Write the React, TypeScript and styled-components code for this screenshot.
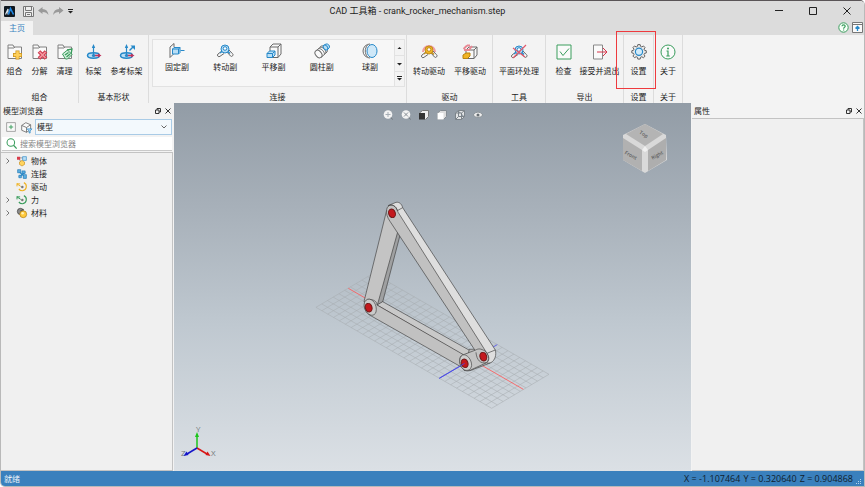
import React from "react";
import styled, { createGlobalStyle } from "styled-components";

const GlobalStyle = createGlobalStyle`
  * { box-sizing: border-box; }
  html, body { margin: 0; height: 100%; }
  body, button, input, select {
    font-family: "Open Sans", "Noto Sans CJK SC", sans-serif;
    font-size: 8px;
    line-height: 12px;
    color: #1c1c1c;
  }
  button { border: 0; padding: 0; background: none; cursor: pointer; }
  svg { display: block; flex: none; overflow: visible; }
`;

const Window = styled.div`
  display: flex;
  flex-direction: column;
  height: 100vh;
  background: #f3f3f3;
  border: 1px solid #b9b9b9;
  border-top-color: #5a5557;
  border-radius: 0 5px 0 5px;
  overflow: hidden;
`;

const TitleBar = styled.header`
  display: flex;
  align-items: center;
  height: 20px;
  background: #dcdcdc;
`;

const QuickAccess = styled.div`
  display: flex;
  align-items: center;
  gap: 4px;
  width: 72px;
  padding-left: 3px;
`;

const Title = styled.h1`
  flex: 1;
  margin: 0;
  text-align: center;
  font-family: Roboto, "Noto Sans CJK SC", sans-serif;
  font-size: 9px;
  font-weight: 400;
  line-height: 18px;
`;

const CaptionButton = styled.button`
  display: grid;
  place-items: center;
  width: 34px;
  height: 18px;
`;

const TabRow = styled.nav`
  display: flex;
  justify-content: space-between;
  align-items: flex-end;
  height: 14px;
  background: #dcdcdc;
`;

const Tab = styled.button`
  width: 32px;
  height: 14px;
  background: #f3f3f3;
  color: #3a83c0;
`;

const TabActions = styled.div`
  display: flex;
  gap: 3px;
  padding: 0 1px 2px;
`;

const Ribbon = styled.div`
  display: flex;
  height: 68px;
  background: #f3f3f3;
`;

const Group = styled.section<{ $width: number }>`
  position: relative;
  display: flex;
  flex-direction: column;
  justify-content: space-between;
  width: ${(p) => p.$width}px;
  height: 68px;
  padding-top: 4px;
  border-right: 1px solid #dcdcdc;
  flex: none;
`;

const GroupItems = styled.div`
  display: flex;
  justify-content: center;
`;

const GroupLabel = styled.h2`
  margin: 0;
  text-align: center;
  font-size: 8px;
  font-weight: 400;
  line-height: 12px;
`;

const RibbonButton = styled.button<{ $width: number }>`
  display: flex;
  flex-direction: column;
  align-items: center;
  gap: 5px;
  width: ${(p) => p.$width}px;
  padding-top: 5px;
  white-space: nowrap;
`;

const Gallery = styled.div`
  display: flex;
  height: 48px;
  margin: 0 1px 0 3px;
  border: 1px solid #e2e2e2;
  background: #f7f7f7;
`;

const GalleryItem = styled.button`
  display: flex;
  flex: 1;
  flex-direction: column;
  align-items: center;
  gap: 2px;
  padding-top: 3px;
`;

const GalleryScroll = styled.div`
  display: grid;
  grid-template-rows: repeat(3, 1fr);
  width: 10px;
  border-left: 1px solid #e2e2e2;
`;

const ScrollButton = styled.button`
  display: grid;
  place-items: center;
  background: #f3f3f3;
  & + & { border-top: 1px solid #e2e2e2; }
`;

const Highlight = styled.div`
  position: absolute;
  inset: -4px -3px auto -8px;
  height: 58px;
  border: 1px solid #ee3a3e;
  pointer-events: none;
`;

const Workspace = styled.main`
  display: flex;
  flex: 1;
  min-height: 0;
`;

const Dock = styled.aside`
  display: flex;
  flex-direction: column;
  width: 172px;
  flex: none;
  background: #f3f3f3;
`;

const DockHeader = styled.div`
  display: flex;
  align-items: center;
  height: 15px;
  padding: 0 2px;
  gap: 4px;
`;

const DockTitle = styled.h2`
  flex: 1;
  margin: 0;
  font-size: 8px;
  font-weight: 400;
  line-height: 12px;
`;

const DockBody = styled.div`
  flex: 1;
  border: 1px solid #c3c3c3;
  border-left: 0;
  background: #f0f0f0;
`;

const BrowserBar = styled.div`
  display: flex;
  align-items: center;
  gap: 5px;
  height: 18px;
  padding: 0 1px 0 5px;
`;

const SelectBox = styled.div`
  display: grid;
  grid-template-columns: 1fr 10px;
  align-items: center;
  flex: 1;
  margin-left: -2px;
  height: 16px;
  border: 1px solid #a9cbe6;
  background: #f3f9fd;
`;

const ModelSelect = styled.select`
  grid-column: 1 / 3;
  grid-row: 1;
  appearance: none;
  height: 14px;
  border: 0;
  padding: 0 1px;
  background: transparent;
`;

const SelectArrow = styled.span`
  grid-column: 2;
  grid-row: 1;
  pointer-events: none;
`;

const SearchBar = styled.label`
  display: flex;
  align-items: center;
  gap: 3px;
  height: 14px;
  margin: 1px 1px;
  padding-left: 4px;
  background: #fff;
  border-bottom: 1px solid #c9c9c9;
`;

const SearchInput = styled.input`
  flex: 1;
  min-width: 0;
  padding: 0;
  border: 0;
  outline: 0;
  background: transparent;
  &::placeholder { color: #858585; opacity: 1; }
`;

const Tree = styled.ul`
  margin: 0;
  padding: 1px 0;
  list-style: none;
`;

const TreeRow = styled.li`
  display: grid;
  grid-template-columns: 6px 10px auto;
  column-gap: 3px;
  align-items: center;
  height: 13px;
  padding-left: 4px;
  & > :nth-child(2) { margin-left: 3px; }
  & > :nth-child(3) { padding-left: 4px; }
`;

const Viewport = styled.section`
  position: relative;
  flex: 1;
  min-width: 0;
  margin: 0 1px;
  overflow: hidden;
  background: linear-gradient(#929ca6, #a7b0b9 28%, #bfc8d0 60%, #dbe0e5);
`;

const Scene = styled.svg`
  width: 100%;
  height: 100%;
`;

const ViewTools = styled.div`
  position: absolute;
  top: 7px;
  left: 0;
  right: 0;
  display: flex;
  justify-content: center;
  gap: 8px;
`;

const CubeOverlay = styled.div`
  position: absolute;
  top: 20px;
  right: 23px;
`;

const TriadOverlay = styled.div`
  position: absolute;
  left: 6px;
  bottom: 10px;
`;

const StatusBar = styled.footer`
  display: flex;
  align-items: center;
  height: 15px;
  padding: 0 2px 0 3px;
  background: #3a80bd;
`;

const StatusText = styled.span`
  flex: 1;
  color: #e6f0f8;
`;

const Coordinates = styled.output`
  display: flex;
  gap: 3px;
  margin-right: 3px;
  font-size: 9px;
  color: #10202e;
`;

const SizeGrip = styled.div`
  align-self: flex-end;
`;

const INK = "#6a6a6a";
const BLUE = "#2789c9";
const PALE = "#b9def5";
const GOLD = "#f0b323";
const RED = "#d8344a";
const GREEN = "#3a9d5d";

type IconName =
  | "compose" | "split" | "clean" | "frame" | "refFrame"
  | "fixed" | "revolute" | "slide" | "cylinder" | "ball"
  | "rotDrive" | "slideDrive" | "loop" | "check" | "exit" | "gear" | "info"
  | "bodies" | "links" | "motors" | "force" | "material" | "addBox" | "cube" | "search";

const folder = (
  <path d="M1 14.500V1h5l1 2h7.500v11.500z M1 4h6l1-1" fill="#fafafa" stroke="#808080" />
);

const axisDisc = (
  <>
    <ellipse cx="7.500" cy="11.500" rx="6" ry="2.700" fill={PALE} stroke={BLUE} strokeWidth="1.500" />
    <path d="M7.500 11V2" stroke={BLUE} strokeWidth="1.200" />
    <path d="M5.800 4l1.700-4 1.700 4z" fill={BLUE} />
    <path d="M8 11.500h5" stroke="#c2355d" strokeWidth="1.600" />
    <path d="M12 9.500l3.500 2-3.500 2z" fill="#c2355d" />
    <circle cx="7.500" cy="11.500" r="1.600" fill={BLUE} />
  </>
);

const clevis = (body: string, edge: string) => (
  <>
    <path d="M5 8L1 11a1.500 1.500 0 0 0 2 2.300L7 10.500M10 9l3.500 4a1.500 1.500 0 0 0 2-2.300L12 7" fill="#f7f7f7" stroke={INK} />
    <circle cx="8" cy="6" r="4" fill={body} stroke={edge} />
    <circle cx="8" cy="5.500" r="1.800" fill="#fff" stroke={edge} />
    <path d="M5 8.500l-2 1.500M11 8.500l2 2" stroke={edge} strokeWidth="1.500" />
  </>
);

const drawings: Record<IconName, React.ReactNode> = {
  compose: <>{folder}<path d="M10.500 6.500v9M6 11h9" stroke="#c8921c" strokeWidth="4" /><path d="M10.500 7.200v7.600M6.700 11h7.600" stroke="#ffd05a" strokeWidth="2.600" /></>,
  split: <>{folder}<path d="M7 7.500l7 7M14 7.500l-7 7" stroke="#cf3a4f" strokeWidth="3.800" /><path d="M7.500 8l6 6M13.500 8l-6 6" stroke="#f49aa3" strokeWidth="1.500" /></>,
  clean: <>{folder}<path d="M5.500 10l5-4 4.500 4.500-4.500 4.500h-2z" fill="#d5f0de" stroke={GREEN} /><path d="M8 11l3.500-2.500M9.500 13l3.500-3M10 6l5-1-1 5" stroke={GREEN} strokeWidth="1.300" /></>,
  frame: axisDisc,
  refFrame: <>{axisDisc}<path d="M10.500 6.500L14 3" stroke={BLUE} strokeWidth="1.500" /><path d="M11.500 1.500H16V6z" fill={BLUE} /></>,
  fixed: <><path d="M1 4L5 0.500V4M5 10.500L1 14.500V4" fill="#f7f7f7" stroke={INK} /><path d="M3.500 6l1.500-1.500h6v5L9.500 11h-6zM3.500 6h6v5M9.500 6L11 4.500M11.500 7.500h4" fill={PALE} stroke={BLUE} /></>,
  revolute: clevis(PALE, BLUE),
  slide: <><path d="M4 4l3-3h8v10l-3 3.500H4V4M4 4h8v10.500M12 4l3-3" fill="#f9f9f9" stroke={INK} /><path d="M1 10.500l2.500-2.500H9v4l-2.500 2.500H1zM1 10.500h5.500v4M6.500 10.500L9 8" fill={PALE} stroke={BLUE} /></>,
  cylinder: <><path d="M2 8l5.500-5c3-1 7 3 5.500 6l-6 5.500" fill="#fafafa" stroke={INK} /><ellipse cx="4.500" cy="11" rx="2.900" ry="4.200" transform="rotate(-40 4.500 11)" fill="#fafafa" stroke={INK} /><path d="M4.500 5.500c3 0 6 3 6 6M6 4c3 0 6 3 6 6" fill="none" stroke={INK} /><path d="M9.500 2.500L12 1a3 3 0 0 1 3.500 3.500l-2 2z" fill={PALE} stroke={BLUE} /><ellipse cx="11.500" cy="4.500" rx="1.900" ry="2.800" transform="rotate(-40 11.500 4.500)" fill={PALE} stroke={BLUE} /></>,
  ball: <><path d="M8 1a7 7 0 1 0 0 14" fill="#fafafa" stroke={INK} /><path d="M5.500 2c-3 4-3 8 0 12" fill="none" stroke={INK} /><ellipse cx="10" cy="8" rx="5" ry="6.500" fill="#cfe8f8" stroke={BLUE} /></>,
  rotDrive: <><path d="M2 8a6 6 0 0 1 12 0" fill="none" stroke="#ef9ba4" strokeWidth="2" />{clevis(GOLD, "#c08c1c")}</>,
  slideDrive: <><path d="M4 6l3-3h8v8l-3 3.500H4V6M4 6h8v8.500M12 6l3-3" fill="#f9f9f9" stroke={INK} /><path d="M1.500 5L5 1.500M5 1.500h3M2 6h5l3-4" stroke="#e98793" strokeWidth="1.800" fill="none" /><path d="M1 11l3-2h4v3l-2.500 2.500H1z" fill={GOLD} stroke="#b9820f" /></>,
  loop: <>{clevis(PALE, BLUE)}<path d="M2 14L15 1M2 4l12 9" stroke="#e0596b" strokeWidth="1.200" /></>,
  check: <><path d="M1 1h14v14H1z" fill="#fafafa" stroke={GREEN} /><path d="M4 7.500l3 4 6-7" fill="none" stroke={GREEN} /></>,
  exit: <><path d="M1.500 1h9v14h-9z" fill="#fafafa" stroke="#888" /><path d="M5 8h10M11 4l4 4-4 4" fill="none" stroke={RED} /></>,
  gear: <g transform="translate(.8 -.3) scale(.9)"><path d="M6.700 1h2.600l.5 2 1.300.6 1.900-1.100 1.700 1.800-1.100 1.800.5 1.200 2 .5v2.500l-2 .5-.5 1.200 1.100 1.900-1.800 1.700-1.800-1.100-1.300.6-.5 2H6.700l-.5-2-1.300-.6L3 15.500l-1.700-1.700 1.100-1.900-.5-1.200-1.900-.5V7.800l1.900-.5.500-1.200L1.300 4.300 3 2.500l1.900 1.100L6.200 3z" fill="#e9e9e9" stroke="#555" /><circle cx="8" cy="9" r="4" fill="#d3ebf9" stroke={BLUE} strokeWidth="1.300" /></g>,
  info: <><circle cx="8" cy="8" r="7" fill="#fafafa" stroke={GREEN} /><circle cx="8" cy="4.500" r="1" fill={GREEN} /><path d="M6.500 7H8v5M6.300 12h3.500" fill="none" stroke={GREEN} strokeWidth="1.200" /></>,
  bodies: <><path d="M3 3l4 9M3 3h9" stroke={INK} /><path d="M0 1h5v5H0z" fill="#d93c4b" /><path d="M9 1h6v6H9z" fill={PALE} stroke={BLUE} /><path d="M4 9.500l4-2.500 4 2.500v4L8 16l-4-2.500z" fill="#ffd45f" stroke="#c68a14" /></>,
  links: <><path d="M2 3l12 11M3 13L13 5" stroke={BLUE} strokeWidth="2" /><path d="M1 1h5v5H1zM10 9h5v6h-5zM8 3h5v4H8zM3 10h4v4H3z" fill="#60afe0" stroke="#1673b4" /></>,
  motors: <><path d="M0 3l6 4M0 2v5M0 3h5" stroke={GOLD} strokeWidth="1.600" /><path d="M11 1c6 3 5 12-2 13-3 0-5-1-6-3" fill="none" stroke={GOLD} strokeWidth="1.800" /><circle cx="8.500" cy="8" r="2" fill="#777" /></>,
  force: <><path d="M0 3l6 4M0 2v5M0 3h5" stroke={GREEN} strokeWidth="1.600" /><path d="M11 1c6 3 5 12-2 13-3 0-5-1-6-3" fill="none" stroke={GREEN} strokeWidth="1.800" /><circle cx="8.500" cy="8" r="2" fill="#777" /></>,
  material: <><circle cx="5.500" cy="5.500" r="5" fill="#8a8a8a" stroke="#333" /><path d="M5 5l6-3" stroke="#333" /><circle cx="10" cy="10" r="5.500" fill="#ffc93c" stroke="#a87509" /><circle cx="9" cy="8.500" r="2" fill="#fff0b5" /></>,
  addBox: <><path d="M1 1h14v14H1z" fill="#fafafa" stroke="#777" /><path d="M8 4.500v7M4.500 8h7" stroke={GREEN} strokeWidth="1.500" /></>,
  cube: <><path d="M1 5l6-4 7 3v7l-6 4-7-3zM1 5l7 3v7M8 8l6-4" fill="#fafafa" stroke={INK} strokeWidth="1.200" /><path d="M9 10h7l-2.700 3v3h-1.500v-3z" fill={PALE} stroke={BLUE} /></>,
  search: <><circle cx="7" cy="6.500" r="5.500" fill="none" stroke={GREEN} strokeWidth="1.500" /><path d="M11 10.500l4.500 5" stroke={GREEN} strokeWidth="1.800" /></>,
};

const Icon = ({ name, size = 16 }: { name: IconName; size?: number }) => (
  <svg width={size} height={size} viewBox="0 0 16 16" fill="none" aria-hidden="true">
    {drawings[name]}
  </svg>
);

type Command = { label: string; icon: IconName; width: number };
const composeCommands: Command[] = [
  { label: "组合", icon: "compose", width: 25 },
  { label: "分解", icon: "split", width: 25 },
  { label: "清理", icon: "clean", width: 25 },
];
const shapeCommands: Command[] = [
  { label: "标架", icon: "frame", width: 26 },
  { label: "参考标架", icon: "refFrame", width: 40 },
];
const joints: { label: string; icon: IconName }[] = [
  { label: "固定副", icon: "fixed" },
  { label: "转动副", icon: "revolute" },
  { label: "平移副", icon: "slide" },
  { label: "圆柱副", icon: "cylinder" },
  { label: "球副", icon: "ball" },
];
const driveCommands: Command[] = [
  { label: "转动驱动", icon: "rotDrive", width: 41 },
  { label: "平移驱动", icon: "slideDrive", width: 41 },
];
const exportCommands: Command[] = [
  { label: "检查", icon: "check", width: 30 },
  { label: "接受并退出", icon: "exit", width: 42 },
];

const RibbonGroup = ({ label, width, commands, highlighted }: {
  label: string; width: number; commands: Command[]; highlighted?: boolean;
}) => (
  <Group $width={width}>
    <GroupItems>
      {commands.map((c) => (
        <RibbonButton key={c.label} $width={c.width}>
          <Icon name={c.icon} />
          {c.label}
        </RibbonButton>
      ))}
    </GroupItems>
    <GroupLabel>{label}</GroupLabel>
    {highlighted && <Highlight />}
  </Group>
);

const Triangle = ({ up, bar }: { up?: boolean; bar?: boolean }) => (
  <svg width="5" height="5" viewBox="0 0 5 5" aria-hidden="true">
    {bar && <path d="M0 0.500h5" stroke="#222" />}
    <path d={up ? "M0.500 4h4l-2-2z" : "M0 2h5l-2.500 2.500z"} fill="#222" />
  </svg>
);

const DockControls = () => (
  <>
    <button aria-label="浮动">
      <svg width="6" height="6" viewBox="0 0 6 6" fill="none" stroke="#333">
        <path d="M0.500 2h3.500v3.500H0.500zM2 2V0.500h3.500V4H4" />
      </svg>
    </button>
    <button aria-label="关闭面板">
      <svg width="6" height="6" viewBox="0 0 6 6" stroke="#333"><path d="M0.500 0.500l5 5M5.500 0.500l-5 5" /></svg>
    </button>
  </>
);

const treeNodes: { label: string; icon: IconName; expandable: boolean }[] = [
  { label: "物体", icon: "bodies", expandable: true },
  { label: "连接", icon: "links", expandable: false },
  { label: "驱动", icon: "motors", expandable: false },
  { label: "力", icon: "force", expandable: true },
  { label: "材料", icon: "material", expandable: true },
];

const gridLines = [
  ...Array.from({ length: 11 }, (_, i) => {
    const x = 18 + i * 17.2;
    const y = 352 - i * 10.2;
    return `M${x} ${y}l527 303`;
  }),
  ...Array.from({ length: 31 }, (_, i) => {
    const x = 18 + i * 17.567;
    const y = 352 + i * 10.1;
    return `M${x} ${y}l172 -102`;
  }),
].join("");

const pins = [[246, 70], [176, 353], [464, 520], [520, 500]];

const Mechanism = () => (
  <Scene viewBox="174 104 517 366" preserveAspectRatio="xMidYMid meet" role="img" aria-label="曲柄摇杆机构">
    <g transform="translate(310 190) scale(.3333)" strokeLinejoin="round" fill="none">
      <path d={gridLines} stroke="#a6abaf" strokeWidth="1.600" />
      <path d="M115 295L640 598" stroke="#ff5959" strokeWidth="2.500" />
      <path d="M388 565L562 464" stroke="#5050ef" strokeWidth="2.500" />
      <g stroke="#414141" strokeWidth="2">
        <path d="M265 105L271 132 218 336 198 350z" fill="#9fa0a1" />
        <path d="M230 61L162 335 202 346 267 112z" fill="#c4c4c4" />
        <path d="M201 345L218 335 484 484 462 497z" fill="#c9c9c9" />
        <path d="M173 328C190 327 202 335 201 345L462 495 452 530 182 377C164 370 155 337 173 328z" fill="#c1c1c1" />
        <path d="M173 328C187 324 203 344 198 366 193 381 177 377 169 365 159 349 160 333 173 328z" fill="#cacaca" />
        <path d="M478 478L517 477C535 475 548 490 550 508L541 519 480 542 463 542z" fill="#bbb" />
        <path d="M234 47L258 37C269 35 276 44 278 53L556 480C560 495 555 511 543 518L532 520 524 497 262 72z" fill="#dedede" />
        <path d="M230 59C232 43 249 41 258 53L265 68 531 490C542 505 535 519 525 518 514 519 506 507 501 490L240 94C232 83 228 70 230 59z" fill="#c1c1c1" />
        <path d="M236 47C248 41 257 49 263 62M262 62L278 53M531 490L556 480" />
        <path d="M458 495L495 481C508 474 512 477 524 482 536 494 540 508 530 518L480 541C463 548 449 531 449 513 449 503 452 498 458 495z" fill="#c4c4c4" />
        <path d="M458 495C470 491 485 508 485 526 483 542 469 545 459 537 448 526 445 501 458 495z" fill="#cfcfcf" />
        <path d="M498 487C500 511 512 522 529 518" />
      </g>
      {pins.map(([x, y]) => (
        <ellipse key={x} cx={x} cy={y} rx="10" ry="13" transform={`rotate(-18 ${x} ${y})`} fill="#c3181d" stroke="#6d1717" strokeWidth="3" />
      ))}
      <path d="M388 565L464 520" stroke="#4646e8" strokeWidth="2.500" />
    </g>
  </Scene>
);

const viewIcons: { label: string; art: React.ReactNode }[] = [
  { label: "适合窗口", art: <><circle cx="5" cy="4.500" r="4.300" fill="#f3f3f3" /><path d="M5 2v5M2.500 4.500h5" stroke="#a5adb4" /><path d="M8 7.500L9.500 9.500" stroke="#6d7479" /></> },
  { label: "缩放选择", art: <><circle cx="5" cy="4.500" r="4.300" fill="#f3f3f3" /><path d="M3 2.500l4 4M7 2.500l-4 4" stroke="#858d94" /><path d="M8 7.500L9.500 9.500" stroke="#6d7479" /></> },
  { label: "着色", art: <><path d="M0.500 3l3-2.500h6v6l-3 3" fill="#eee" stroke="#777" /><path d="M0 3h6v6.500H0z" fill="#333" /></> },
  { label: "实体边线", art: <><path d="M0.500 3l3-2.500h6v6l-3 3h-6z" fill="#ddd" stroke="#858c92" /><path d="M0.500 3h6v6.500h-6z" fill="#fff" /></> },
  { label: "线框", art: <path d="M0.500 3l3-2.500h6v6l-3 3h-6zM0.500 3h6v6.500M6.500 3l3-2.500M3.500 0.500v6h6M0.500 9.500l3-3" fill="#e2e4e5" stroke="#7c848a" /> },
  { label: "可见性", art: <><path d="M0 5q5-6 10 0-5 5-10 0z" fill="#eee" stroke="#8c9499" /><circle cx="5" cy="5" r="1.500" fill="#686f74" /></> },
];

const ViewCube = () => (
  <svg width="46" height="50" viewBox="0 0 46 50" aria-label="视图方块">
    <path d="M23 1L44 12 45 37 23 50 1 37 1 12z" fill="#d9d9d9" />
    <path d="M23 1L41 11 23 23 4 11z" fill="#b4b4b4" />
    <path d="M1 15L20 27V48L1 37z" fill="#b1b1b1" />
    <path d="M44 15L26 27V48L44 37z" fill="#aeaeae" />
    <path d="M23 23L26 27 23 29 20 27z" fill="#f0f0f0" />
    <g fontFamily="Open Sans, sans-serif" fontSize="5" fontWeight="600" fill="#606060" textAnchor="middle">
      <text x="22" y="13" transform="rotate(32 22 11)">Top</text>
      <text x="9" y="34" transform="rotate(28 9 32)">Front</text>
      <text x="35" y="34" transform="rotate(-28 35 32)">Right</text>
    </g>
  </svg>
);

const Triad = () => (
  <svg width="38" height="36" viewBox="0 0 38 36" aria-label="坐标轴">
    <g fontFamily="Open Sans, sans-serif" fontSize="8" fill="#74797d">
      <text x="1" y="31">Z</text>
      <text x="16" y="7">Y</text>
      <text x="31" y="31">X</text>
    </g>
    <path d="M17 23V10" stroke="#1bc51b" strokeWidth="1.500" /><path d="M15 12l2-5 2 5z" fill="#1bc51b" />
    <path d="M17 23L27 29" stroke="#d81616" strokeWidth="1.500" /><path d="M25.500 30l2-3.500 3 4.500z" fill="#d81616" />
    <path d="M17 23L7 29" stroke="#1515c9" strokeWidth="1.500" /><path d="M8.500 30l-2-3.500-3 4.500z" fill="#1515c9" />
  </svg>
);

export default function App() {
  return (
    <>
      <GlobalStyle />
      <Window>
        <TitleBar>
          <QuickAccess>
            <svg width="11" height="11" viewBox="0 0 11 11" fill="none" aria-label="CAD">
              <rect width="11" height="11" rx="1" fill="#101820" />
              <path d="M1.500 8.500L4 3v5.500" stroke="#d9e5ef" strokeWidth="1.200" />
              <path d="M4.500 8.500L6.500 2.500 9.500 8.500" stroke="#1e88e5" strokeWidth="1.600" />
            </svg>
            <span />
            <button aria-label="保存">
              <svg width="11" height="11" viewBox="0 0 11 11" fill="#eee" stroke="#777">
                <path d="M0.500 0.500h9l1 1v9h-10zM2.500 0.500h6v4h-6zM2.500 10.500v-4h6v4M4 8.500h3" />
              </svg>
            </button>
            <button aria-label="撤销">
              <svg width="11" height="9" viewBox="0 0 11 9" fill="#999"><path d="M0 3.500L4.500 0v2C8 2 10 4 10.500 8 9 6 7.500 5 4.500 5v2z" /></svg>
            </button>
            <button aria-label="重做">
              <svg width="11" height="9" viewBox="0 0 11 9" fill="#999"><path d="M10.500 3.500L6 0v2C2.500 2 0.500 4 0 8 1.500 6 3 5 6 5v2z" /></svg>
            </button>
            <button aria-label="自定义"><Triangle bar /></button>
          </QuickAccess>
          <Title>CAD 工具箱 - crank_rocker_mechanism.step</Title>
          <CaptionButton aria-label="最小化">
            <svg width="8" height="8" viewBox="0 0 8 8" stroke="#222"><path d="M0 3.500h8" /></svg>
          </CaptionButton>
          <CaptionButton aria-label="最大化">
            <svg width="8" height="8" viewBox="0 0 8 8" fill="none" stroke="#222"><path d="M0.500 0.500h7v7h-7z" /></svg>
          </CaptionButton>
          <CaptionButton aria-label="关闭">
            <svg width="8" height="8" viewBox="0 0 8 8" stroke="#222"><path d="M0.500 0.500l7 7M7.500 0.500l-7 7" /></svg>
          </CaptionButton>
        </TitleBar>
        <TabRow>
          <Tab>主页</Tab>
          <TabActions>
            <button aria-label="帮助">
              <svg width="11" height="11" viewBox="0 0 11 11" fill="none" stroke={GREEN}>
                <circle cx="5.500" cy="5.500" r="4.700" fill="#f8fff9" />
                <path d="M4 4.300c0-2 3.200-2 3.200 0 0 1-1.600 1-1.600 2.400M5.600 7.500v1" strokeWidth="1.200" />
              </svg>
            </button>
            <button aria-label="折叠功能区">
              <svg width="11" height="11" viewBox="0 0 11 11" fill="none" stroke="#777">
                <path d="M0.500 0.500h10v10h-10zM0.500 2.500h10" fill="#fafafa" />
                <path d="M5.500 9V5M3.500 6.500l2-2 2 2" stroke={BLUE} strokeWidth="1.300" />
              </svg>
            </button>
          </TabActions>
        </TabRow>
        <Ribbon>
          <RibbonGroup label="组合" width={78} commands={composeCommands} />
          <RibbonGroup label="基本形状" width={70} commands={shapeCommands} />
          <Group $width={258}>
            <Gallery>
              {joints.map((j) => (
                <GalleryItem key={j.label}>
                  <Icon name={j.icon} />
                  {j.label}
                </GalleryItem>
              ))}
              <GalleryScroll>
                <ScrollButton aria-label="上一行"><Triangle up /></ScrollButton>
                <ScrollButton aria-label="下一行"><Triangle /></ScrollButton>
                <ScrollButton aria-label="展开"><Triangle bar /></ScrollButton>
              </GalleryScroll>
            </Gallery>
            <GroupLabel>连接</GroupLabel>
          </Group>
          <RibbonGroup label="驱动" width={86} commands={driveCommands} />
          <RibbonGroup label="工具" width={53} commands={[{ label: "平面环处理", icon: "loop", width: 44 }]} />
          <RibbonGroup label="导出" width={78} commands={exportCommands} />
          <RibbonGroup label="设置" width={30} commands={[{ label: "设置", icon: "gear", width: 26 }]} highlighted />
          <RibbonGroup label="关于" width={29} commands={[{ label: "关于", icon: "info", width: 26 }]} />
        </Ribbon>
        <Workspace>
          <Dock>
            <DockHeader>
              <DockTitle>模型浏览器</DockTitle>
              <DockControls />
            </DockHeader>
            <BrowserBar>
              <button aria-label="全部展开"><Icon name="addBox" size={10} /></button>
              <button aria-label="筛选"><Icon name="cube" size={11} /></button>
              <SelectBox>
                <ModelSelect aria-label="浏览内容"><option>模型</option></ModelSelect>
                <SelectArrow>
                  <svg width="6" height="4" viewBox="0 0 6 4" fill="none" stroke="#666"><path d="M0.500 0.500L3 3l2.500-2.500" /></svg>
                </SelectArrow>
              </SelectBox>
            </BrowserBar>
            <SearchBar>
              <Icon name="search" size={11} />
              <SearchInput type="text" placeholder="搜索模型浏览器" aria-label="搜索模型浏览器" />
            </SearchBar>
            <DockBody>
              <Tree>
                {treeNodes.map((n) => (
                  <TreeRow key={n.label}>
                    <svg width="6" height="6" viewBox="0 0 6 6" fill="none" stroke="#777">
                      {n.expandable && <path d="M1.500 0.500L4 3 1.500 5.500" />}
                    </svg>
                    <Icon name={n.icon} size={10} />
                    <span>{n.label}</span>
                  </TreeRow>
                ))}
              </Tree>
            </DockBody>
          </Dock>
          <Viewport>
            <Mechanism />
            <ViewTools>
              {viewIcons.map((v) => (
                <button key={v.label} aria-label={v.label}>
                  <svg width="10" height="10" viewBox="0 0 10 10">{v.art}</svg>
                </button>
              ))}
            </ViewTools>
            <CubeOverlay><ViewCube /></CubeOverlay>
            <TriadOverlay><Triad /></TriadOverlay>
          </Viewport>
          <Dock>
            <DockHeader>
              <DockTitle>属性</DockTitle>
              <DockControls />
            </DockHeader>
            <DockBody />
          </Dock>
        </Workspace>
        <StatusBar>
          <StatusText>就绪</StatusText>
          <Coordinates>
            <span>X = -1.107464</span>
            <span>Y = 0.320640</span>
            <span>Z = 0.904868</span>
          </Coordinates>
          <SizeGrip>
            <svg width="6" height="7" viewBox="0 0 6 7" fill="#b5d2ea">
              <path d="M4 0h1v1H4zM2 2h1v1H2zM4 2h1v1H4zM0 4h1v1H0zM2 4h1v1H2zM4 4h1v1H4z" />
            </svg>
          </SizeGrip>
        </StatusBar>
      </Window>
    </>
  );
}
